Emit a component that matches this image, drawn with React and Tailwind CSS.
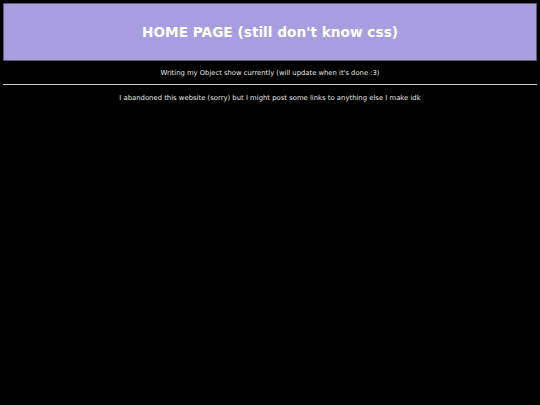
export default function App() {
  return (
    <div className="min-h-[405px] w-[540px] bg-black p-[3px] text-[#e6e6e6] antialiased" style={{ fontFamily: '"DejaVu Sans", Verdana, sans-serif' }}>
      <div className="flex h-[58px] items-center justify-center border border-[#5a5a6a] bg-[#a89de0]">
        <h1 className="text-[13.7px] font-bold text-white">HOME PAGE (still don't know css)</h1>
      </div>
      <p className="mt-[7px] text-center text-[6.8px] leading-[10px]">Writing my Object show currently (will update when it's done :3)</p>
      <div className="mt-[6px] h-px bg-[#cccccc]" />
      <p className="mt-[8px] text-center text-[6.85px] leading-[10px]">I abandoned this website (sorry) but I might post some links to anything else I make idk</p>
    </div>
  );
}
